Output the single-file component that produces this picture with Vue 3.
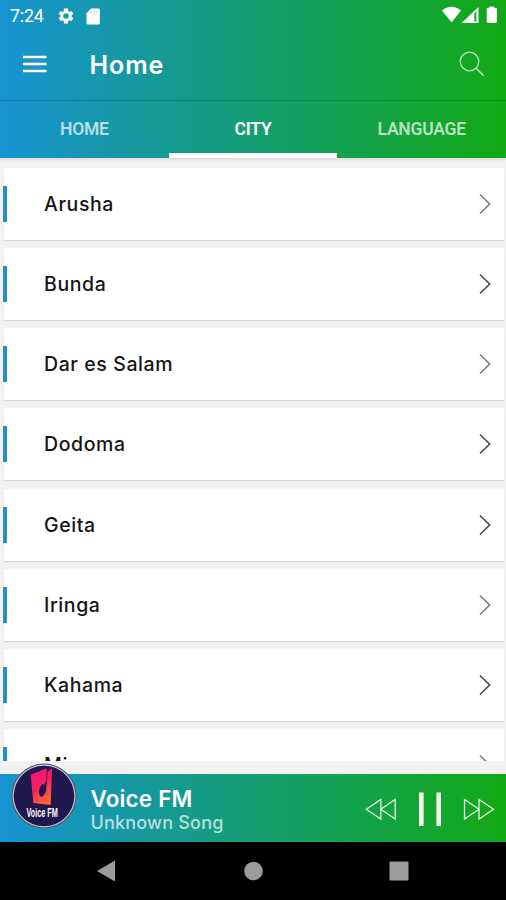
<script setup>
const tabs = ['HOME', 'CITY', 'LANGUAGE']
const active = 'CITY'
const cities = [
  { name: 'Arusha', dim: true },
  { name: 'Bunda' },
  { name: 'Dar es Salam', dim: true },
  { name: 'Dodoma' },
  { name: 'Geita' },
  { name: 'Iringa', dim: true },
  { name: 'Kahama' },
  { name: 'Mi', dim: true }
]
</script>

<template>
  <div class="screen">
    <header class="top">
      <div class="status">
        <span class="time">7:24</span>
        <svg class="gear" width="18" height="18" viewBox="0 0 24 24"><path fill="#fff" fill-rule="evenodd" d="M19.400 13a7.800 7.800 0 0 0 0-2l2.400-1.700-2.300-4-2.700 1.200a7.500 7.500 0 0 0-1.800-1L14.700 2H9.300L9 5.500a7.500 7.500 0 0 0-1.800 1L4.500 5.300l-2.300 4L4.600 11a7.800 7.800 0 0 0 0 2l-2.400 1.700 2.300 4 2.700-1.200a7.500 7.500 0 0 0 1.800 1l.3 3.500h5.400l.3-3.500a7.500 7.500 0 0 0 1.800-1l2.700 1.200 2.300-4zM12 15.700a3.700 3.700 0 1 1 0-7.400 3.700 3.700 0 0 1 0 7.400z" /></svg>
        <svg class="sd" width="14" height="17" viewBox="0 0 14 17"><path fill="#fff" d="M5 .5h7.500A1.300 1.300 0 0 1 13.800 2v13a1.500 1.500 0 0 1-1.500 1.500H2A1.500 1.500 0 0 1 .5 15V5.200z" /><path d="M5.300 3.300v2M8 3.300v2M10.700 3.300v2" stroke="#189cae" stroke-width="1" opacity=".4" /></svg>
        <svg class="signals" width="56" height="18" viewBox="0 0 56 18">
          <path fill="#fff" d="M0 4.500Q9.500-3 19 4.500L9.500 16.500z" />
          <path fill="#fff" fill-rule="evenodd" d="M36.500 1v16h-17zM32.300 7.500V15.500h2V5z" />
          <path fill="#fff" d="M47.500 1.700V.5h4.500v1.200h1.500a1.400 1.400 0 0 1 1.400 1.400v12.500a1.400 1.400 0 0 1-1.400 1.400h-7.400a1.400 1.400 0 0 1-1.400-1.400V3.100a1.400 1.400 0 0 1 1.400-1.400z" />
        </svg>
      </div>
      <div class="toolbar">
        <svg width="24" height="18" viewBox="0 0 24 18"><path d="M0 2h23.500M0 9h23.500M0 16h23.500" stroke="#fff" stroke-width="2.700" /></svg>
        <h1>Home</h1>
        <svg class="search" width="26" height="26" viewBox="0 0 26 26" fill="none" stroke="#fff" stroke-opacity=".72"><circle cx="10.500" cy="10.500" r="9.300" stroke-width="1.300" /><path d="M17.200 17.200L24.700 24.700" stroke-width="1.600" /></svg>
      </div>
      <nav class="tabs">
        <div v-for="t in tabs" :key="t" class="tab" :class="{ on: t === active }">{{ t }}</div>
      </nav>
    </header>

    <main class="list">
      <div v-for="c in cities" :key="c.name" class="card">
        <i class="mark"></i>
        <span class="name">{{ c.name }}</span>
        <svg class="chev" :class="{ dim: c.dim }" width="12" height="22" viewBox="0 0 12 22" fill="none"><path d="M1 1.500L10.700 11 1 20.500" stroke="currentColor" stroke-width="1.500" /></svg>
      </div>
    </main>

    <footer class="player">
      <svg class="logo" width="66" height="66" viewBox="0 0 66 66">
        <defs>
          <linearGradient id="d" x1="0" y1="0" x2=".5" y2="1"><stop offset="0" stop-color="#fa0a84" /><stop offset=".55" stop-color="#f5225f" /><stop offset="1" stop-color="#ff6238" /></linearGradient>
        </defs>
        <circle cx="33" cy="33" r="32.500" fill="#4b5668" />
        <circle cx="33" cy="33" r="31.500" fill="#c6c8d3" />
        <circle cx="33" cy="33" r="30.300" fill="#21174f" />
        <path fill="url(#d)" d="M19.700 11.500L35.500 5.500 36.500 9 41 5.300 39.700 42 22.300 40z" />
        <path d="M36.300 8L35 21" stroke="#7a1750" stroke-width="1.200" />
        <ellipse cx="31.300" cy="27.500" rx="3.200" ry="6.300" fill="#21174f" transform="rotate(10 31.300 27.500)" />
        <path d="M33.500 21L35.700 18 34.800 32z" fill="#21174f" />
        <text transform="translate(15.500 54) scale(.58 1)" class="logo-text">Voice FM</text>
      </svg>
      <div class="track">
        <div class="station">Voice FM</div>
        <div class="song">Unknown Song</div>
      </div>
      <svg class="controls" width="130" height="36" viewBox="0 0 130 36" fill="none" stroke="#e4f5df" stroke-width="1.300">
        <path d="M15.800 8.500V28L1.300 18.200zM30.200 8.500V28L15.800 18.200z" />
        <path d="M56.300 1.500v33.500M73.700 1.500v33.500" stroke="#f5fff0" stroke-width="4.600" />
        <path d="M99.500 8.500V28l14.500-9.800zM114 8.500V28l14.500-9.800z" />
      </svg>
    </footer>

    <div class="navbar">
      <svg width="506" height="58" viewBox="0 0 506 58" fill="#9c9c9c"><path d="M97 29l18-10.500v21z" /><circle cx="253.500" cy="29" r="9.300" /><rect x="389.500" y="19.500" width="19" height="19" rx="1" /></svg>
    </div>
  </div>
</template>

<style>
body { margin: 0; background: #000; }
</style>

<style scoped>
.screen { width: 506px; height: 900px; display: flex; flex-direction: column; overflow: hidden; background: #f3f2f0; font-family: Inter, "Liberation Sans", sans-serif; }
.top, .player { background: linear-gradient(90deg, #1793d2 0%, #149e72 50%, #12a914 100%); }
.top { height: 157.500px; flex: none; display: flex; flex-direction: column; box-shadow: 0 1px 3px rgba(0, 0, 0, .14); z-index: 1; }
.status { height: 32px; display: flex; align-items: center; padding: 0 8px 0 10px; box-sizing: border-box; }
.time { width: 47px; font: 400 18px/32px Roboto, sans-serif; color: #fff; letter-spacing: -.3px; }
.gear { margin-top: -1px; }
.sd { margin-left: 11px; }
.signals { margin-left: auto; margin-top: -2px; }
.toolbar { height: 69px; box-sizing: border-box; border-bottom: 1px solid rgba(0, 60, 60, .25); padding: 0 21px 4px 23px; display: flex; align-items: center; }
h1 { margin: 1px 0 0 42.500px; font-size: 25px; font-weight: 600; color: #fff; line-height: 30px; letter-spacing: .9px; }
.search { margin-left: auto; }
.tabs { flex: 1; display: grid; grid-template-columns: repeat(3, 1fr); }
.tab { display: flex; align-items: center; justify-content: center; font: 600 17.500px Roboto, sans-serif; letter-spacing: -.25px; color: rgba(255, 255, 255, .7); border-bottom: 5px solid transparent; padding-top: 5px; }
.tab.on { color: #fff; border-bottom-color: #fff; }
.list { flex: none; height: 603.500px; box-sizing: border-box; padding: 10.500px 2px 0 4px; display: flex; flex-direction: column; gap: 8.170px; overflow: hidden; }
.card { flex: none; height: 72px; display: flex; align-items: center; background: #fff; box-shadow: 0 1px 1px rgba(0, 0, 0, .1); padding-right: 13px; }
.mark { width: 4px; height: 36px; margin-left: -1px; background: #2590ca; }
.name { margin-left: 37px; font-size: 19.500px; font-weight: 500; color: #151515; letter-spacing: .6px; }
.chev { margin-left: auto; color: #444; }
.chev.dim { color: #777; }
.player { flex: none; height: 68px; margin-top: 13px; display: flex; align-items: center; padding: 0 11px; position: relative; box-sizing: border-box; z-index: 1; }
.logo { margin-top: -24px; flex: none; }
.logo-text { font: 700 12.500px "Liberation Sans", sans-serif; fill: #fff; }
.track { margin-left: 13.500px; padding-top: 3px; }
.station { font-size: 22.500px; line-height: 25px; font-weight: 600; color: #fff; white-space: nowrap; letter-spacing: .15px; }
.song { font-size: 18px; line-height: 23px; font-weight: 500; color: rgba(255, 255, 255, .7); white-space: nowrap; letter-spacing: .2px; }
.controls { margin-left: auto; margin-top: 2px; }
.navbar { flex: 1; background: #000; }
.navbar svg { display: block; }
</style>
